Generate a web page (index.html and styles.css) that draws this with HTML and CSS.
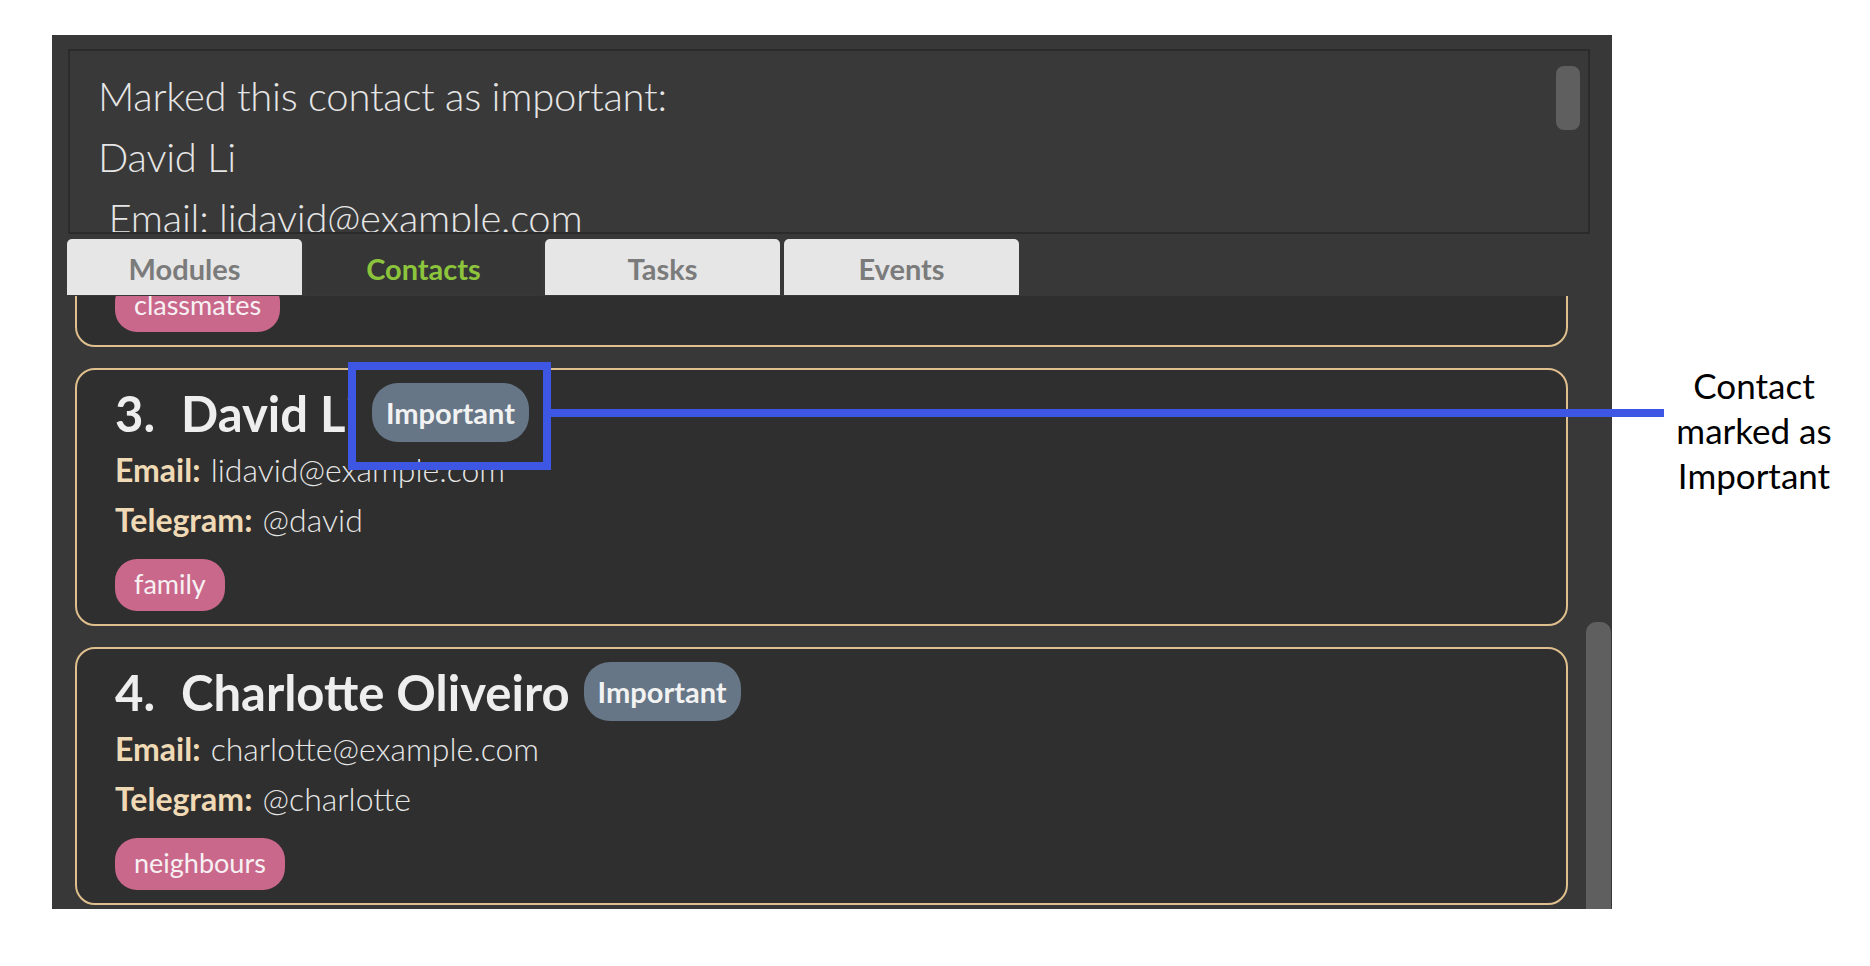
FILE: index.html
```html
<!DOCTYPE html>
<html lang="en">
<head>
<meta charset="utf-8">
<title>Contacts</title>
<link rel="stylesheet" href="styles.css">
</head>
<body>
<div class="page">
  <div class="app">
    <div class="result-wrap">
      <div class="result-box">
        <div class="result-text">Marked this contact as important:
David Li
 Email: lidavid@example.com</div>
        <div class="result-thumb"></div>
      </div>
    </div>
    <div class="tabs">
      <div class="tab">Modules</div>
      <div class="tab active">Contacts</div>
      <div class="tab">Tasks</div>
      <div class="tab">Events</div>
    </div>
    <div class="list-viewport">
      <div class="list">
        <div class="card">
          <div class="card-head">
            <span class="card-id">2.</span>
            <span class="card-name">Bernice Yu</span>
          </div>
          <div class="card-row"><span class="label">Email:</span> <span class="value">berniceyu@example.com</span></div>
          <div class="card-row"><span class="label">Telegram:</span> <span class="value">@bernice</span></div>
          <div class="tags"><span class="tag">classmates</span></div>
        </div>
        <div class="card">
          <div class="card-head">
            <span class="card-id">3.</span>
            <span class="card-name">David Li</span>
            <span class="badge">Important</span>
          </div>
          <div class="card-row"><span class="label">Email:</span> <span class="value">lidavid@example.com</span></div>
          <div class="card-row"><span class="label">Telegram:</span> <span class="value">@david</span></div>
          <div class="tags"><span class="tag">family</span></div>
        </div>
        <div class="card">
          <div class="card-head">
            <span class="card-id">4.</span>
            <span class="card-name">Charlotte Oliveiro</span>
            <span class="badge">Important</span>
          </div>
          <div class="card-row"><span class="label">Email:</span> <span class="value">charlotte@example.com</span></div>
          <div class="card-row"><span class="label">Telegram:</span> <span class="value">@charlotte</span></div>
          <div class="tags"><span class="tag">neighbours</span></div>
        </div>
      </div>
      <div class="list-thumb"></div>
    </div>
  </div>
  <div class="note">Contact<br>marked as<br>Important</div>
  <div class="callout-box"></div>
  <div class="callout-line"></div>
</div>
</body>
</html>
```

FILE: styles.css
```css
* { box-sizing: border-box; }

html, body {
  margin: 0;
  padding: 0;
  background: #ffffff;
}

body {
  font-family: "Lato", "Open Sans", sans-serif;
}

.page {
  position: relative;
  display: flex;
  align-items: flex-start;
  width: 1870px;
  height: 966px;
  padding: 35px 0 0 52px;
  overflow: hidden;
}

.app {
  width: 1560px;
  height: 874px;
  flex: none;
  background: #383838;
  display: flex;
  flex-direction: column;
}

/* ---------- result display ---------- */
.result-wrap {
  padding: 14px 22px 0 16px;
}

.result-box {
  position: relative;
  height: 185px;
  border: 2px solid #2b2b2b;
  background: #393939;
  overflow: hidden;
  padding: 15px 0 0 28px;
}

.result-text {
  white-space: pre;
  font-weight: 300;
  font-size: 40px;
  letter-spacing: -0.25px;
  line-height: 61px;
  color: #e6e6e6;
}

.result-thumb {
  position: absolute;
  top: 15px;
  right: 8px;
  width: 24px;
  height: 64px;
  border-radius: 8px;
  background: #5f5f5f;
}

/* ---------- tabs ---------- */
.tabs {
  display: flex;
  gap: 4px;
  margin-top: 5px;
  padding-left: 15px;
  height: 57px;
  flex: none;
}

.tab {
  width: 235px;
  height: 56px;
  border-radius: 5px 5px 0 0;
  background: #e6e6e6;
  color: #7b7b7b;
  font-weight: 700;
  font-size: 29px;
  line-height: 60px;
  text-align: center;
}

.tab.active {
  background: #363636;
  color: #8cc43c;
}

/* ---------- list ---------- */
.list-viewport {
  position: relative;
  flex: 1;
  overflow: hidden;
}

.list {
  display: flex;
  flex-direction: column;
  gap: 21px;
  padding: 0 44px 0 23px;
  margin-top: -207px;
}

.list-thumb {
  position: absolute;
  top: 326px;
  right: 1px;
  bottom: 0;
  width: 25px;
  border-radius: 10px 10px 0 0;
  background: #5f5f5f;
}

.card {
  height: 258px;
  border: 2px solid #dfbf8d;
  border-radius: 20px;
  background: #2f2f2f;
  padding: 13px 20px 13px 38px;
}

.card-head {
  display: flex;
  align-items: center;
  height: 59px;
  color: #eeeeee;
  font-weight: 700;
  font-size: 49px;
  white-space: nowrap;
}

.card-id {
  width: 66px;
}

.badge {
  margin-left: 14px;
  height: 59px;
  padding: 0 14px;
  border-radius: 26px;
  background: #667686;
  color: #f2f2f2;
  font-size: 29px;
  font-weight: 700;
  line-height: 59px;
}

.card-row {
  font-size: 32px;
  line-height: 50px;
  color: #e6e6e6;
  white-space: nowrap;
}

.card-head + .card-row {
  margin-top: 3px;
}

.label {
  font-weight: 700;
  color: #f0dab6;
}

.value {
  font-weight: 300;
  margin-left: 2px;
}

.tags {
  display: flex;
  gap: 10px;
  margin-top: 14px;
}

.tag {
  height: 52px;
  padding: 0 19px;
  border-radius: 22px;
  background: #c9688b;
  color: #f7f0f3;
  font-size: 27px;
  line-height: 50px;
}

/* ---------- annotation ---------- */
.note {
  margin-left: 52px;
  margin-top: 328px;
  width: 180px;
  flex: none;
  text-align: center;
  font-size: 35px;
  line-height: 45px;
  color: #000000;
}

.callout-box {
  position: absolute;
  left: 348px;
  top: 362px;
  width: 203px;
  height: 108px;
  border: 8px solid #3d56e3;
}

.callout-line {
  position: absolute;
  left: 551px;
  top: 409px;
  width: 1113px;
  height: 8px;
  background: #3d56e3;
}
```
